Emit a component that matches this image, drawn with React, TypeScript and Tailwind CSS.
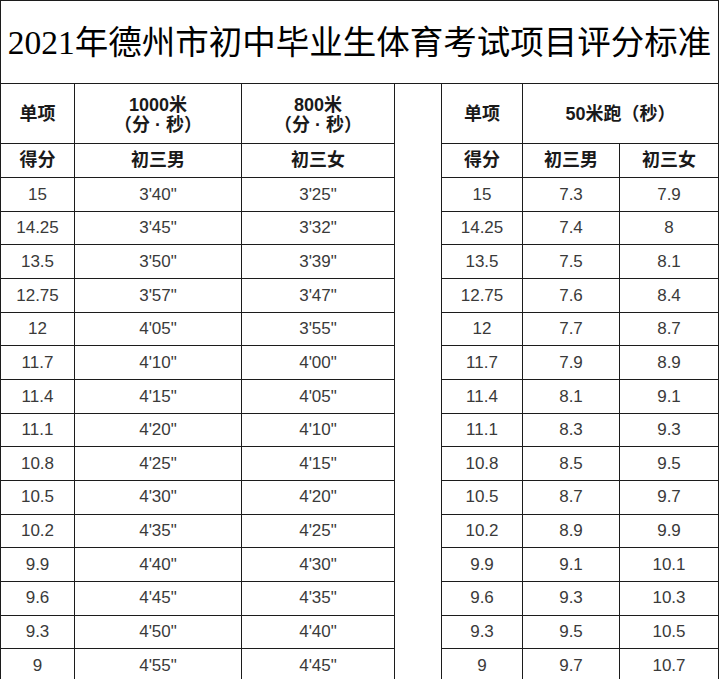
const rows: [string, string, string, string, string][] = [
  ["15", "3'40\"", "3'25\"", "7.3", "7.9"],
  ["14.25", "3'45\"", "3'32\"", "7.4", "8"],
  ["13.5", "3'50\"", "3'39\"", "7.5", "8.1"],
  ["12.75", "3'57\"", "3'47\"", "7.6", "8.4"],
  ["12", "4'05\"", "3'55\"", "7.7", "8.7"],
  ["11.7", "4'10\"", "4'00\"", "7.9", "8.9"],
  ["11.4", "4'15\"", "4'05\"", "8.1", "9.1"],
  ["11.1", "4'20\"", "4'10\"", "8.3", "9.3"],
  ["10.8", "4'25\"", "4'15\"", "8.5", "9.5"],
  ["10.5", "4'30\"", "4'20\"", "8.7", "9.7"],
  ["10.2", "4'35\"", "4'25\"", "8.9", "9.9"],
  ["9.9", "4'40\"", "4'30\"", "9.1", "10.1"],
  ["9.6", "4'45\"", "4'35\"", "9.3", "10.3"],
  ["9.3", "4'50\"", "4'40\"", "9.5", "10.5"],
  ["9", "4'55\"", "4'45\"", "9.7", "10.7"],
];

const cell = "flex items-center justify-center border-r border-b border-[#1c1c1c]";
const head =
  cell +
  " text-[18px] font-bold text-[#1a1a1a] [text-spacing-trim:space-all] [font-family:'Liberation_Sans','Noto_Sans_CJK_SC',sans-serif]";
const data =
  cell + " text-[17px] text-[#3a3a3a] [font-family:'Liberation_Sans',Arial,sans-serif]";

export default function App() {
  return (
    <div className="w-[720px] h-[679px] overflow-hidden bg-white">
      <div className="grid w-[719px] grid-cols-[74px_167px_153px_47px_81px_97px_99px] grid-rows-[83px_60px_34px_repeat(15,33.67px)] border-l border-t border-[#1c1c1c]">
        <div
          className={
            cell +
            " col-span-7 pt-[2px] text-[33.5px] leading-none text-black [font-family:'Liberation_Serif','Noto_Sans_CJK_SC',serif]"
          }
        >
          2021年德州市初中毕业生体育考试项目评分标准
        </div>

        <div className="col-start-4 row-start-2 row-end-19 border-r border-b border-[#1c1c1c]" />

        <div className={head + " pt-[2px]"}>单项</div>
        <div className={head + " flex-col pt-[2px] leading-[20px]"}>
          <span>1000米</span>
          <span>（分 · 秒）</span>
        </div>
        <div className={head + " flex-col pt-[2px] leading-[20px]"}>
          <span>800米</span>
          <span>（分 · 秒）</span>
        </div>
        <div className={head + " pt-[2px]"}>单项</div>
        <div className={head + " col-span-2 pt-[2px]"}>50米跑（秒）</div>

        <div className={head}>得分</div>
        <div className={head}>初三男</div>
        <div className={head}>初三女</div>
        <div className={head}>得分</div>
        <div className={head}>初三男</div>
        <div className={head}>初三女</div>

        {rows.map((r) => (
          <>
            <div key={r[0] + "a"} className={data}>{r[0]}</div>
            <div key={r[0] + "b"} className={data}>{r[1]}</div>
            <div key={r[0] + "c"} className={data}>{r[2]}</div>
            <div key={r[0] + "d"} className={data}>{r[0]}</div>
            <div key={r[0] + "e"} className={data}>{r[3]}</div>
            <div key={r[0] + "f"} className={data}>{r[4]}</div>
          </>
        ))}
      </div>
    </div>
  );
}
